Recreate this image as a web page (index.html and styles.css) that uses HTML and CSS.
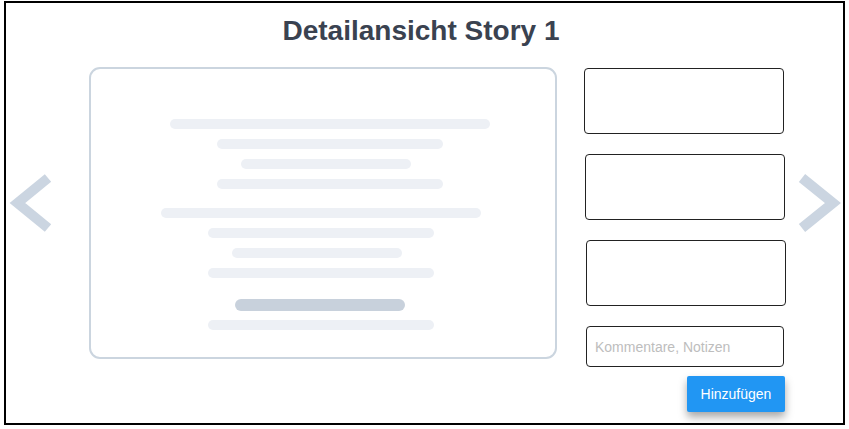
FILE: index.html
```html
<!DOCTYPE html>
<html lang="de">
<head>
<meta charset="utf-8">
<title>Detailansicht Story 1</title>
<link rel="stylesheet" href="styles.css">
</head>
<body>
<div class="frame">
  <h1 class="title">Detailansicht Story 1</h1>
  <div class="content">
    <div class="nav nav-prev">
      <svg class="chevron" width="50" height="66" viewBox="0 0 50 66" aria-hidden="true">
        <polyline points="42,8 11.5,33 42,58" fill="none" stroke="#cbd5e1" stroke-width="10" stroke-linejoin="miter" stroke-linecap="butt"/>
      </svg>
    </div>
    <div class="card">
      <div class="group group-a">
        <span class="bar w-xl"></span>
        <span class="bar w-lg"></span>
        <span class="bar w-md"></span>
        <span class="bar w-lg"></span>
      </div>
      <div class="group group-b">
        <span class="bar w-xl"></span>
        <span class="bar w-lg"></span>
        <span class="bar w-md"></span>
        <span class="bar w-lg"></span>
      </div>
      <div class="group group-c">
        <span class="bar bar-dark w-md-c"></span>
        <span class="bar w-lg"></span>
      </div>
    </div>
    <div class="side">
      <textarea class="box box-1"></textarea>
      <textarea class="box box-2"></textarea>
      <textarea class="box box-3"></textarea>
      <input class="note" type="text" placeholder="Kommentare, Notizen">
      <button class="add" type="button">Hinzufügen</button>
    </div>
    <div class="nav nav-next">
      <svg class="chevron" width="50" height="66" viewBox="0 0 50 66" aria-hidden="true">
        <polyline points="9,8 40,33 9,58" fill="none" stroke="#cbd5e1" stroke-width="10" stroke-linejoin="miter" stroke-linecap="butt"/>
      </svg>
    </div>
  </div>
</div>
</body>
</html>
```

FILE: styles.css
```css
* {
  box-sizing: border-box;
}

html, body {
  margin: 0;
  padding: 0;
  background: #ffffff;
}

body {
  font-family: "Liberation Sans", Arial, sans-serif;
}

.frame {
  margin: 1px 0 0 4px;
  width: 841px;
  height: 424px;
  border: 2px solid #000000;
  display: flex;
  flex-direction: column;
}

.title {
  margin: 12px 0 0;
  padding-right: 7px;
  font-size: 28px;
  line-height: 32px;
  font-weight: 700;
  color: #3a4250;
  text-align: center;
}

.content {
  margin-top: 20px;
  display: flex;
  align-items: flex-start;
}

.nav {
  display: flex;
}

.nav-prev {
  width: 83px;
  padding-top: 103px;
}

.nav-next {
  width: 57px;
  padding-top: 103px;
  padding-left: 7px;
}

.chevron {
  display: block;
}

.card {
  width: 468px;
  height: 292px;
  border: 2px solid #cbd5df;
  border-radius: 11px;
  padding-top: 50px;
  display: flex;
  flex-direction: column;
}

.group {
  display: flex;
  flex-direction: column;
  align-items: center;
  gap: 10px;
}

.group-a {
  padding-left: 13px;
}

.group-b {
  margin-top: 19px;
  padding-right: 5px;
}

.group-c {
  margin-top: 21px;
  padding-right: 5px;
  gap: 9px;
}

.bar {
  display: block;
  height: 10px;
  border-radius: 5px;
  background: #edf0f5;
}

.bar-dark {
  height: 12px;
  border-radius: 6px;
  background: #c8d1dc;
}

.w-xl { width: 320px; }
.w-lg { width: 226px; }
.w-md { width: 170px; margin-right: 7px; }
.w-md-c { width: 170px; margin-right: 2px; }

.side {
  width: 202px;
  margin-left: 27px;
  margin-top: 1px;
  display: flex;
  flex-direction: column;
  align-items: flex-start;
}

.box {
  display: block;
  width: 200px;
  height: 66px;
  margin: 0 0 20px;
  padding: 4px;
  border: 1px solid #222222;
  border-radius: 4px;
  resize: none;
  font-family: "Liberation Sans", Arial, sans-serif;
  font-size: 14px;
  background: #ffffff;
}

.box-2 {
  margin-left: 1px;
}

.box-3 {
  margin-left: 2px;
}

.note {
  display: block;
  width: 198px;
  height: 41px;
  margin: 0 0 9px 2px;
  padding: 0 8px;
  border: 1px solid #222222;
  border-radius: 4px;
  font-family: "Liberation Sans", Arial, sans-serif;
  font-size: 14px;
  color: #333333;
  background: #ffffff;
}

.note::placeholder {
  color: #bdbdbd;
}

.add {
  margin-left: 103px;
  width: 98px;
  height: 36px;
  padding: 0;
  border: none;
  border-radius: 2px;
  background: #2196f3;
  color: #ffffff;
  font-family: "Liberation Sans", Arial, sans-serif;
  font-size: 14px;
  box-shadow: 0 5px 8px rgba(0, 0, 0, 0.35);
  cursor: pointer;
}
```
